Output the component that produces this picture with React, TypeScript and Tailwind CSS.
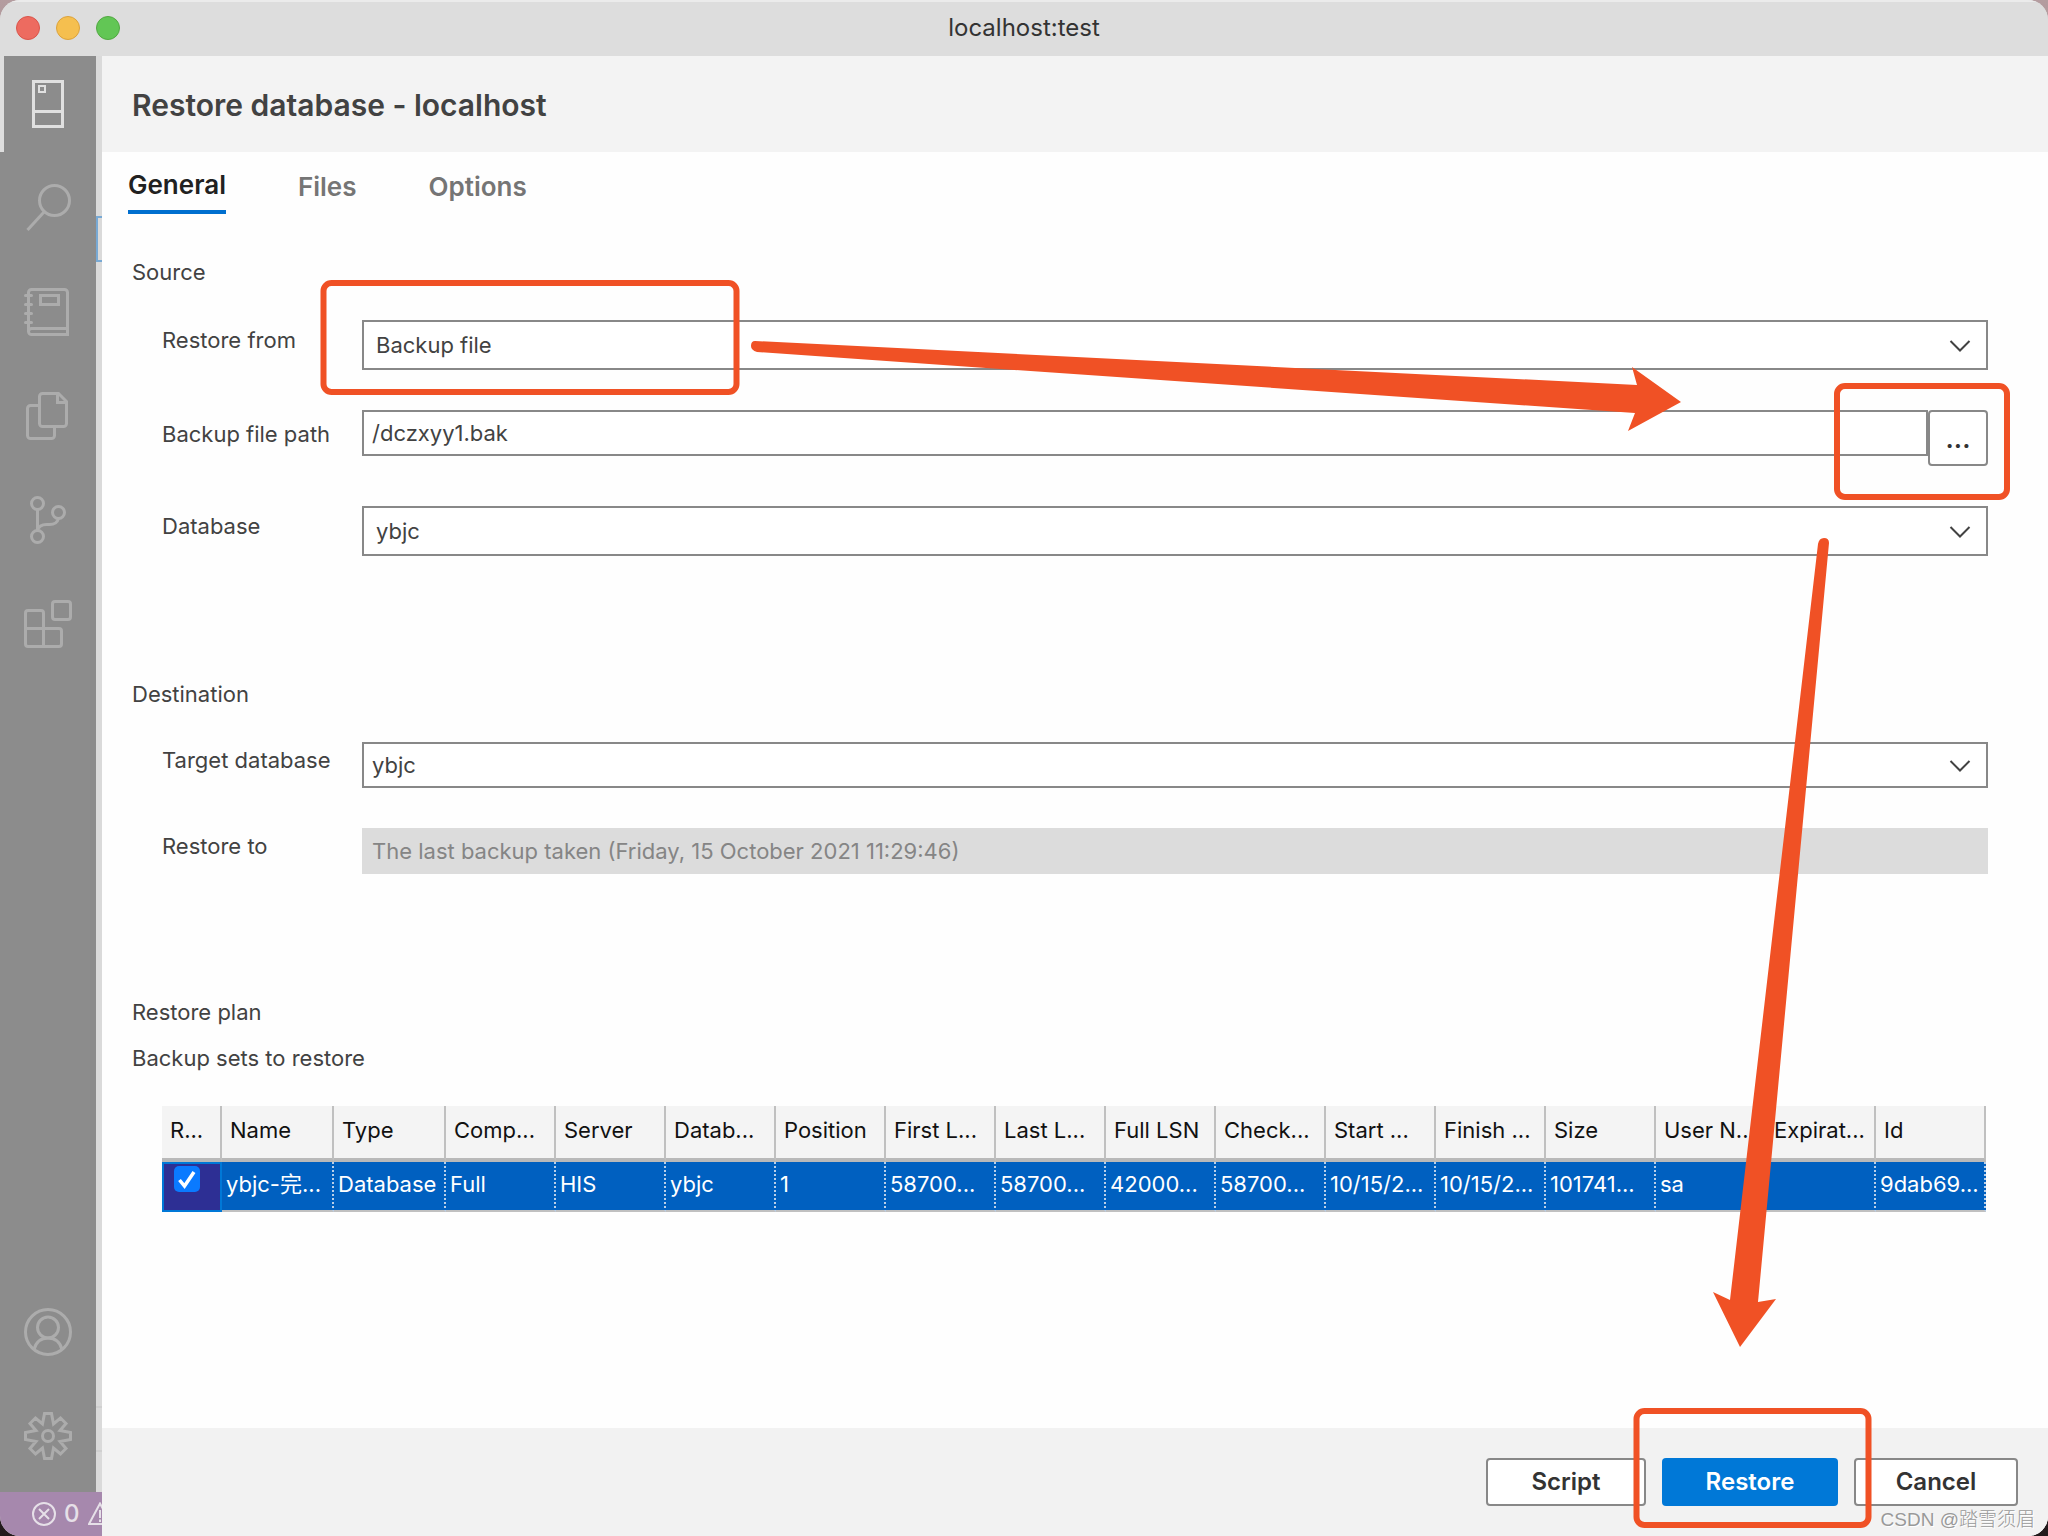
import React from 'react';

const columns = [
  ['R...', ''],
  ['Name', 'ybjc-完...'],
  ['Type', 'Database'],
  ['Comp...', 'Full'],
  ['Server', 'HIS'],
  ['Datab...', 'ybjc'],
  ['Position', '1'],
  ['First L...', '58700...'],
  ['Last L...', '58700...'],
  ['Full LSN', '42000...'],
  ['Check...', '58700...'],
  ['Start ...', '10/15/2...'],
  ['Finish ...', '10/15/2...'],
  ['Size', '101741...'],
  ['User N...', 'sa'],
  ['Expirat...', ''],
  ['Id', '9dab69...'],
];

const icon = 'block h-12 w-12';

function ServerIcon() {
  return (
    <svg className={icon} viewBox="0 0 48 48" fill="none" stroke="currentColor">
      <path d="M9.500 1.500h29v45h-29zM9.500 31.500h29" strokeWidth="3" />
      <path d="M15 6h6v6h-6z" strokeWidth="2" />
    </svg>
  );
}
function SearchIcon() {
  return (
    <svg className={icon} viewBox="0 0 48 48" fill="none" stroke="currentColor" strokeWidth="3">
      <circle cx="30.500" cy="16.500" r="15" />
      <path d="M20 28L3.500 46" />
    </svg>
  );
}
function NotebookIcon() {
  return (
    <svg className={icon} viewBox="0 0 48 48" fill="none" stroke="currentColor" strokeWidth="3">
      <path d="M43.500 46.500H7.500a3 3 0 0 1-3-3V4.500a3 3 0 0 1 3-3h33a3 3 0 0 1 3 3zM4.500 43.500a3 3 0 0 1 3-3h36" />
      <path d="M16.500 7.500h18v9h-18z" />
      <path d="M1.500 7.500h6M1.500 16.500h6M1.500 25.500h6M1.500 34.500h6" strokeLinecap="round" />
    </svg>
  );
}
function FilesIcon() {
  return (
    <svg className={icon} viewBox="0 0 48 48" fill="none" stroke="currentColor" strokeWidth="3">
      <path d="M18.500 1.500h16l8 8V31.500a3 3 0 0 1-3 3h-21a3 3 0 0 1-3-3V4.500a3 3 0 0 1 3-3z" />
      <path d="M33.500 1.500v9h9M15.500 13.500H6.500a3 3 0 0 0-3 3v27a3 3 0 0 0 3 3h21a3 3 0 0 0 3-3V34.500" />
    </svg>
  );
}
function BranchIcon() {
  return (
    <svg className={icon} viewBox="0 0 48 48" fill="none" stroke="currentColor" strokeWidth="3">
      <circle cx="13.500" cy="7.500" r="6" />
      <circle cx="34.500" cy="16.500" r="6" />
      <circle cx="13.500" cy="40.500" r="6" />
      <path d="M13.500 13.500v21M34.500 22.500c-1 4-4 6-9 6h-3c-5 0-8 2-9 6" />
    </svg>
  );
}
function ExtensionsIcon() {
  return (
    <svg className={icon} viewBox="0 0 48 48" fill="none" stroke="currentColor" strokeWidth="3">
      <path d="M4 10.500h13a2.500 2.500 0 0 1 2.500 2.500v15.500H35a2.500 2.500 0 0 1 2.500 2.500v13a2.500 2.500 0 0 1-2.500 2.500H4a2.500 2.500 0 0 1-2.500-2.500V13a2.500 2.500 0 0 1 2.500-2.500zM19.500 28.500v18M1.500 28.500h18" />
      <rect x="28.500" y="1.500" width="18" height="18" rx="2.500" />
    </svg>
  );
}
function AccountIcon() {
  return (
    <svg className={icon} viewBox="0 0 48 48" fill="none" stroke="currentColor" strokeWidth="3">
      <circle cx="24" cy="24" r="22.500" />
      <circle cx="24" cy="19.500" r="10.500" />
      <path d="M10 41.500C12 34 17 30 24 30s12 4 14 11.500" />
    </svg>
  );
}
function GearIcon() {
  return (
    <svg className={icon} viewBox="0 0 48 48" fill="none" stroke="currentColor" strokeWidth="3">
      <path d="M20.500 1.500L27.500 1.500L29.500 12L36.500 6L42 11.500L36 18.500L46.500 20.500L46.500 27.500L36 29.500L42 36.500L36.500 42L29.500 36L27.500 46.500L20.500 46.500L18.500 36L11.500 42L6 36.500L12 29.500L1.500 27.500L1.500 20.500L12 18.500L6 11.500L11.500 6L18.500 12Z" />
      <circle cx="24" cy="24" r="5.500" />
    </svg>
  );
}
function Chevron() {
  return (
    <svg className="pointer-events-none absolute right-4 top-1/2 h-6 w-6 -translate-y-1/2" viewBox="0 0 24 24" fill="none" stroke="#424242" strokeWidth="2">
      <path d="M2.500 8L12 17.500 21.500 8" />
    </svg>
  );
}

function Row({ id, label, className, labelClass, children }: { id: string; label: string; className: string; labelClass: string; children: React.ReactNode }) {
  return (
    <div className={`flex items-start ${className}`}>
      <label htmlFor={id} className={`w-50 shrink-0 leading-8 ${labelClass}`}>{label}</label>
      {children}
    </div>
  );
}

function Select({ id, value, className }: { id: string; value: string; className: string }) {
  return (
    <div className="relative min-w-0 flex-1">
      <select id={id} className={`block w-full appearance-none rounded-none border-2 border-[#888] bg-white ${className}`}>
        <option>{value}</option>
      </select>
      <Chevron />
    </div>
  );
}

export default function App() {
  return (
    <div className="relative min-h-screen bg-linear-to-b from-[#b49c9f] to-[#221a1c] font-['Inter','Noto_Sans_CJK_SC',sans-serif] text-[22px] text-[#424242]">
      <div className="flex min-h-screen flex-col overflow-hidden rounded-[20px] bg-[#dadada]">
        <header className="grid h-14 grid-cols-[1fr_auto_1fr] items-center border-t-2 border-[#ebebeb] bg-[#ddd] px-4 pb-0.5">
          <div className="flex gap-4">
            <button aria-label="Close" className="h-6 w-6 rounded-full border border-[#d9554b] bg-[#ed6b60]" />
            <button aria-label="Minimize" className="h-6 w-6 rounded-full border border-[#dba23c] bg-[#f5bf4f]" />
            <button aria-label="Zoom" className="h-6 w-6 rounded-full border border-[#52a842] bg-[#62c655]" />
          </div>
          <h1 className="text-[24px] leading-8 text-[#333]">localhost:test</h1>
        </header>

        <div className="flex flex-1">
          <aside className="flex w-[102px] shrink-0 flex-col">
            <div className="flex flex-1">
              <nav aria-label="Activity bar" className="flex w-24 flex-col bg-[#8c8c8c] text-[#acacac]">
                <button aria-label="Connections" className="flex h-24 items-center border-l-4 border-[#dedede] pl-5 text-[#e0e0e0]"><ServerIcon /></button>
                <button aria-label="Search" className="flex h-26 items-center justify-center pt-2"><SearchIcon /></button>
                <button aria-label="Notebooks" className="flex h-26 items-center justify-center pt-2"><NotebookIcon /></button>
                <button aria-label="Explorer" className="flex h-26 items-center justify-center pt-2"><FilesIcon /></button>
                <button aria-label="Source control" className="flex h-26 items-center justify-center pt-2"><BranchIcon /></button>
                <button aria-label="Extensions" className="flex h-26 items-center justify-center pt-2"><ExtensionsIcon /></button>
                <button aria-label="Account" className="mt-auto flex h-26 items-center justify-center"><AccountIcon /></button>
                <button aria-label="Settings" className="mb-1 flex h-26 items-center justify-center"><GearIcon /></button>
              </nav>
              <div className="flex flex-1 flex-col justify-between pt-40 pb-10">
                <div className="h-[46px] border-2 border-r-0 border-[#78a9d4]" />
                <div className="h-[46px] border-y-2 border-[#d0d0d0]" />
              </div>
            </div>
            <div className="flex h-11 items-center gap-2 overflow-hidden bg-[#a688ad] pl-8 text-[#e6e0e8]">
              <svg className="h-6 w-6 shrink-0" viewBox="0 0 24 24" fill="none" stroke="currentColor" strokeWidth="2">
                <circle cx="12" cy="12" r="11" />
                <path d="M7 7l10 10M17 7L7 17" />
              </svg>
              <span className="w-4 text-center text-[24px] leading-8 font-medium">0</span>
              <svg className="h-6 w-6 shrink-0" viewBox="0 0 24 24" fill="none" stroke="currentColor" strokeWidth="2">
                <path d="M12 1.500L23 22H1zM12 8v8M12 17.500v2.500" />
              </svg>
            </div>
          </aside>

          <section className="flex min-w-0 flex-1 flex-col bg-[#fefefe]">
            <div className="flex h-24 items-center bg-[#f3f3f3] px-[30px] pt-0.5">
              <h2 className="text-[30px] leading-9 font-semibold">Restore database - localhost</h2>
            </div>
            <div className="flex flex-1 flex-col pr-[60px] pl-[30px]">
              <div role="tablist" className="-ml-1 flex items-start gap-18 pt-[15px] text-[26px] leading-9 font-semibold text-[#757575]">
                <button role="tab" aria-selected="true" className="border-b-4 border-[#006fcf] pb-[7px] text-[#212121]">General</button>
                <button role="tab" aria-selected="false" className="pt-0.5">Files</button>
                <button role="tab" aria-selected="false" className="pt-0.5">Options</button>
              </div>
              <h3 className="mt-[42px] leading-8">Source</h3>
              <div className="pl-[30px]">
                <Row id="from" label="Restore from" className="mt-8" labelClass="pt-1">
                  <Select id="from" value="Backup file" className="h-[50px] px-3" />
                </Row>
                <Row id="path" label="Backup file path" className="mt-10" labelClass="pt-2">
                  <div className="flex min-w-0 flex-1 items-start">
                    <input id="path" defaultValue="/dczxyy1.bak" className="h-[46px] min-w-0 flex-1 rounded-none border-2 border-[#888] bg-white px-2" />
                    <button aria-label="Browse" className="flex h-14 w-15 items-center justify-center rounded border-2 border-[#888] bg-white text-[26px] font-semibold text-[#333]">...</button>
                  </div>
                </Row>
                <Row id="db" label="Database" className="mt-10" labelClass="pt-1">
                  <Select id="db" value="ybjc" className="h-[50px] px-3" />
                </Row>
              </div>
              <h3 className="mt-[122px] leading-8">Destination</h3>
              <div className="pl-[30px]">
                <Row id="target" label="Target database" className="mt-8" labelClass="pt-0.5">
                  <Select id="target" value="ybjc" className="h-[46px] px-2" />
                </Row>
                <Row id="to" label="Restore to" className="mt-10" labelClass="pt-0.5">
                  <input id="to" disabled defaultValue="The last backup taken (Friday, 15 October 2021 11:29:46)" className="h-[46px] min-w-0 flex-1 bg-[#dcdcdc] px-[10px] text-[#858585]" />
                </Row>
              </div>
              <h3 className="mt-[122px] leading-8">Restore plan</h3>
              <h4 className="mt-3.5 leading-8">Backup sets to restore</h4>
              <div className="mt-8 mr-0.5 ml-[30px]">
                <table className="w-full table-fixed border-separate border-spacing-0 text-left leading-8 whitespace-nowrap">
                  <colgroup>
                    <col className="w-15" />
                    <col className="w-28" />
                    <col className="w-28" />
                    {columns.slice(3).map(([name]) => <col key={name} />)}
                  </colgroup>
                  <thead>
                    <tr className="h-14 bg-[#f4f4f4] text-[#111]">
                      {columns.map(([name]) => (
                        <th key={name} className="overflow-hidden border-r-2 border-b-4 border-r-[#c0c0c0] border-b-[#b9b9b9] p-0 pb-1 pl-2 font-normal">{name}</th>
                      ))}
                    </tr>
                  </thead>
                  <tbody>
                    <tr className="h-[50px] bg-[#0060c0] text-white">
                      <td className="border-2 border-[#0078d7] bg-[#2d2f94] p-0 pl-2.5 align-top">
                        <label className="relative block h-7">
                          <input type="checkbox" defaultChecked aria-label="Restore" className="mt-0.5 block h-[26px] w-[26px] appearance-none rounded-[5px] bg-[#0a7aff]" />
                          <svg className="absolute top-0 left-0 h-[26px] w-[26px]" viewBox="0 0 26 26">
                            <path d="M5.500 14l5 6 9.500-14" fill="none" stroke="#fff" strokeWidth="3.500" />
                          </svg>
                        </label>
                      </td>
                      {columns.slice(1).map(([name, value]) => (
                        <td key={name} className="overflow-hidden border-r-2 border-b-2 border-r-[#b9cfe8] border-b-[#c0c0c0] p-0 pb-1 pl-1 [border-right-style:dotted]">{value}</td>
                      ))}
                    </tr>
                  </tbody>
                </table>
              </div>
            </div>
            <footer className="flex h-27 items-start justify-end gap-4 bg-[#f2f2f2] px-[30px] pt-[30px] text-[24px] leading-8 font-semibold text-[#333]">
              <button className="h-12 w-40 rounded border-2 border-[#888] bg-white">Script</button>
              <button className="h-12 w-44 rounded bg-[#0078d7] text-white">Restore</button>
              <button className="h-12 w-41 rounded border-2 border-[#888] bg-white">Cancel</button>
            </footer>
          </section>
        </div>
      </div>

      {/* Annotation layer */}
      <svg className="pointer-events-none absolute top-0 left-0 h-[1536px] w-[2048px]" viewBox="0 0 2048 1536" fill="none">
        <g stroke="#f05125" strokeWidth="6">
          <rect x="323.500" y="283" width="413" height="109" rx="8" />
          <rect x="1837" y="386" width="170" height="111" rx="8" />
          <rect x="1636.500" y="1411" width="232" height="114" rx="8" />
        </g>
        <g fill="#f05125">
          <path d="M755 341L1637 385L1632 367L1681 402L1628 431L1635 413L757 352Q751 350 751 346Q751 341 755 341Z" />
          <path d="M1818 544Q1819 538 1824 538Q1829 538 1829 543L1758 1302L1776 1299L1740 1347L1713 1292L1730 1300Z" />
        </g>
      </svg>
      <span className="absolute right-[13px] bottom-0.5 font-['Liberation_Sans','Noto_Sans_CJK_SC',sans-serif] text-[19px] leading-7 font-light text-[#999] [text-shadow:1px_1px_0_#fff]">CSDN @踏雪须眉</span>
    </div>
  );
}
